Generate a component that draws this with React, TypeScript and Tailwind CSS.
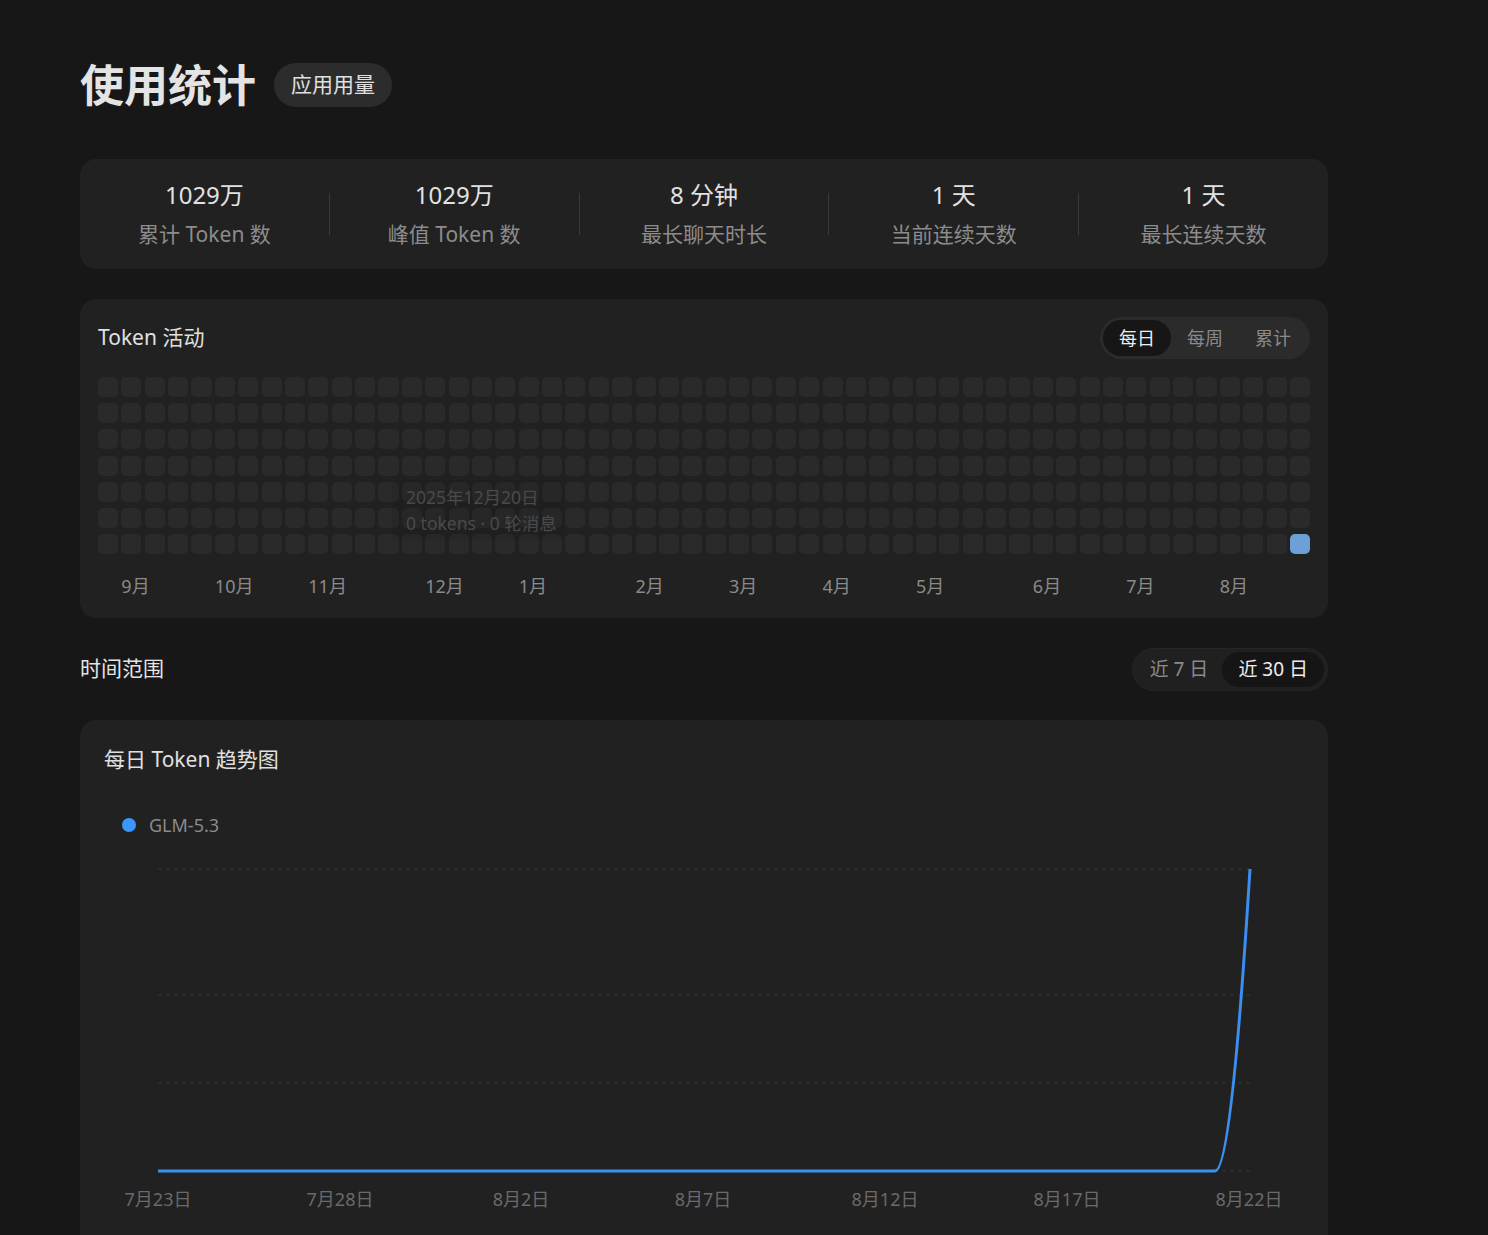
import React from 'react';

const font = { fontFamily: '"Noto Sans", "Noto Sans CJK SC", sans-serif' };

const stats = [
    { value: '1029万', label: '累计 Token 数' },
    { value: '1029万', label: '峰值 Token 数' },
    { value: '8 分钟', label: '最长聊天时长' },
    { value: '1 天', label: '当前连续天数' },
    { value: '1 天', label: '最长连续天数' },
];

const months = [
    { col: 1, label: '9月' },
    { col: 5, label: '10月' },
    { col: 9, label: '11月' },
    { col: 14, label: '12月' },
    { col: 18, label: '1月' },
    { col: 23, label: '2月' },
    { col: 27, label: '3月' },
    { col: 31, label: '4月' },
    { col: 35, label: '5月' },
    { col: 40, label: '6月' },
    { col: 44, label: '7月' },
    { col: 48, label: '8月' },
];

const xLabels = [
    { x: 158, label: '7月23日' },
    { x: 340, label: '7月28日' },
    { x: 521, label: '8月2日' },
    { x: 703, label: '8月7日' },
    { x: 885, label: '8月12日' },
    { x: 1067, label: '8月17日' },
    { x: 1249, label: '8月22日' },
];

const COLS = 52;
const ROWS = 7;

const StatsCard = () => (
    <div className="mt-[48px] h-[110px] rounded-[16px] bg-[#212121] flex items-center">
        {stats.map((s, i) => (
            <React.Fragment key={i}>
                {i > 0 && <div className="w-px h-[42px] bg-[#3a3a3a]" />}
                <div className="flex-1 flex flex-col items-center">
                    <div className="text-[24px] leading-[32px] text-[#e2e2e2]">{s.value}</div>
                    <div className="mt-[8px] text-[21px] leading-[30px] text-[#8c8c8c]">{s.label}</div>
                </div>
            </React.Fragment>
        ))}
    </div>
);

const Heatmap = () => {
    const cells = Array.from({ length: COLS * ROWS }, (_, i) => i);
    return (
        <div className="mt-[30px] rounded-[16px] bg-[#212121] px-[18px] pt-[19px] pb-[20px]">
            <div className="flex items-center justify-between h-[40px]">
                <div className="text-[21px] text-[#e0e0e0]">Token 活动</div>
                <div className="flex items-center rounded-full bg-[#2b2b2b] p-[3px]">
                    <button className="h-[36px] px-[16px] rounded-full bg-[#161616] text-[18px] text-[#eeeeee]">每日</button>
                    <button className="h-[36px] px-[16px] rounded-full text-[18px] text-[#8a8a8a]">每周</button>
                    <button className="h-[36px] px-[16px] rounded-full text-[18px] text-[#8a8a8a]">累计</button>
                </div>
            </div>
            <div className="relative mt-[19px]">
                <div className="grid grid-cols-[repeat(52,minmax(0,1fr))] gap-x-[3.3px] gap-y-[6.2px]">
                    {cells.map((i) => (
                        <div
                            key={i}
                            className={
                                i === COLS * ROWS - 1
                                    ? 'h-[20px] rounded-[5px] bg-[#6b9fd6]'
                                    : 'h-[20px] rounded-[5px] bg-[#2a2a2a]'
                            }
                        />
                    ))}
                </div>
                <div className="absolute left-[294px] top-[103px] w-[172px] h-[60px] rounded-[6px] bg-black/[0.06] px-[14px] py-[4px] text-[17.5px] leading-[26px] text-[#4a4a4a] whitespace-nowrap">
                    <div>2025年12月20日</div>
                    <div>0 tokens · 0 轮消息</div>
                </div>
            </div>
            <div className="mt-[20px] grid grid-cols-[repeat(52,minmax(0,1fr))] gap-x-[3.3px]">
                {months.map((m) => (
                    <div
                        key={m.label}
                        className="row-start-1 whitespace-nowrap text-[18px] leading-[24px] text-[#8a8a8a]"
                        style={{ gridColumnStart: m.col + 1 }}
                    >
                        {m.label}
                    </div>
                ))}
            </div>
        </div>
    );
};

const TrendChart = () => (
    <div className="mt-[30px] rounded-[16px] bg-[#212121] pt-[25px] pb-[24px]">
        <div className="px-[24px] text-[21px] leading-[28px] text-[#e0e0e0]">每日 Token 趋势图</div>
        <div className="mt-[40px] ml-[42px] flex items-center h-[24px]">
            <span className="w-[14px] h-[14px] rounded-full bg-[#3b96ff]" />
            <span className="ml-[13px] text-[18px] text-[#8a8a8a]">GLM-5.3</span>
        </div>
        <svg className="mt-[13px] block" width="1248" height="385" viewBox="80 850 1248 385">
            {[869, 995, 1083, 1171].map((y) => (
                <line key={y} x1="158" x2="1250" y1={y} y2={y} stroke="#363636" strokeWidth="1" strokeDasharray="4 4" />
            ))}
            <path
                d="M158 1171 L1215 1171 C1228 1171 1240 1030 1250 869"
                fill="none"
                stroke="#3a8ff0"
                strokeWidth="3"
            />
            {xLabels.map((l) => (
                <text
                    key={l.label}
                    x={l.x}
                    y="1206"
                    textAnchor="middle"
                    fontSize="18"
                    fill="#6a6a6a"
                    style={font}
                >
                    {l.label}
                </text>
            ))}
        </svg>
    </div>
);

export default function App() {
    return (
        <div className="min-h-screen bg-[#171717]" style={font}>
            <div className="ml-[80px] w-[1248px] pt-[59px] pb-[40px]">
                <div className="flex items-center h-[52px]">
                    <h1 className="text-[44px] leading-[52px] font-bold text-[#e4e4e4]">使用统计</h1>
                    <span className="ml-[18px] h-[44px] px-[17px] rounded-full bg-[#2c2c2c] flex items-center text-[21px] text-[#e0e0e0]">
                        应用用量
                    </span>
                </div>
                <StatsCard />
                <Heatmap />
                <div className="mt-[30px] flex items-center justify-between h-[42px]">
                    <div className="text-[21px] text-[#e4e4e4]">时间范围</div>
                    <div className="flex items-center rounded-full bg-[#202020] border border-[#262626] p-[3px]">
                        <button className="h-[35px] px-[14px] rounded-full text-[19px] text-[#8a8a8a]">近 7 日</button>
                        <button className="h-[35px] px-[16px] rounded-full bg-[#151515] text-[19px] text-[#eeeeee]">近 30 日</button>
                    </div>
                </div>
                <TrendChart />
            </div>
        </div>
    );
}
